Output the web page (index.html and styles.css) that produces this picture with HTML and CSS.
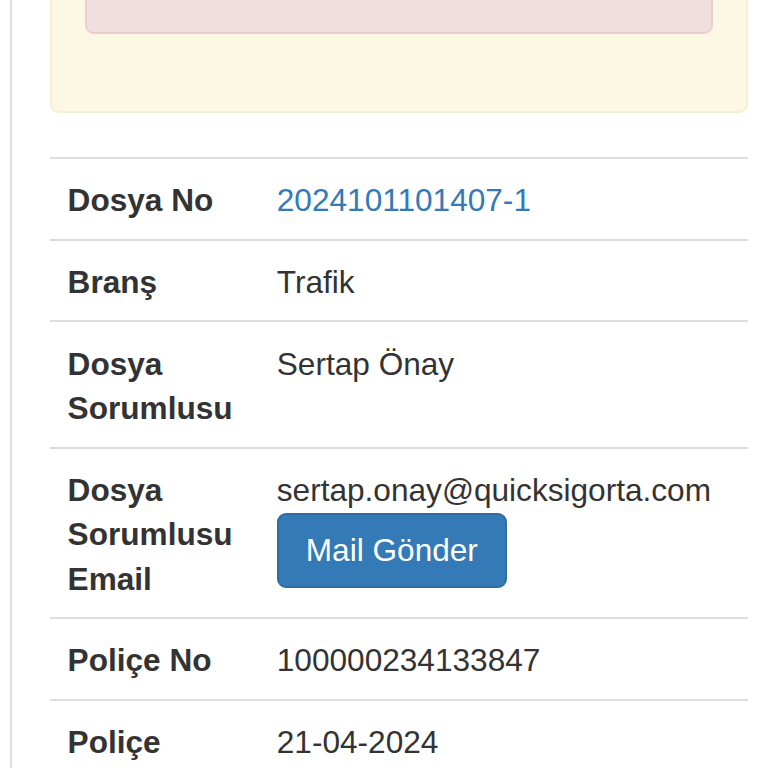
FILE: index.html
```html
<!DOCTYPE html>
<html lang="tr">
<head>
<meta charset="utf-8">
<title>Dosya Detay</title>
<link rel="stylesheet" href="styles.css">
</head>
<body>
<div class="page">
  <div class="alert alert-warning">
    <div class="alert alert-danger"></div>
  </div>
  <table class="table">
    <tbody>
      <tr>
        <th>Dosya No</th>
        <td><a href="#" class="link">2024101101407-1</a></td>
      </tr>
      <tr>
        <th>Branş</th>
        <td>Trafik</td>
      </tr>
      <tr>
        <th>Dosya Sorumlusu</th>
        <td>Sertap Önay</td>
      </tr>
      <tr>
        <th>Dosya Sorumlusu Email</th>
        <td>sertap.onay@quicksigorta.com<button class="btn btn-primary">Mail Gönder</button></td>
      </tr>
      <tr>
        <th>Poliçe No</th>
        <td>100000234133847</td>
      </tr>
      <tr>
        <th>Poliçe Başlangıç</th>
        <td>21-04-2024</td>
      </tr>
    </tbody>
  </table>
</div>
</body>
</html>
```

FILE: styles.css
```css
html, body {
  margin: 0;
  padding: 0;
  background: #fff;
  overflow: hidden;
}
body {
  font-family: "Liberation Sans", Arial, Helvetica, sans-serif;
  font-size: 31.6px;
  line-height: 44.5px;
  color: #333;
}
.page {
  margin-left: 10px;
  border-left: 2px solid #dedede;
  padding-left: 38px;
  padding-right: 20px;
  min-height: 1200px;
}
.alert {
  border-radius: 9px;
  border: 2px solid transparent;
  box-sizing: border-box;
}
.alert-warning {
  background: #fcf8e3;
  border-color: #f7efd4;
  margin-top: -97px;
  padding: 33px 33px;
  margin-bottom: 44px;
}
.alert-danger {
  background: #f2dede;
  border-color: #ebccd1;
  height: 96px;
  margin-bottom: 44px;
}
.table {
  width: 100%;
  border-collapse: collapse;
  border-spacing: 0;
}
.table th,
.table td {
  border-top: 2px solid #dddddd;
  padding: 19.2px 17.6px 16px;
  text-align: left;
  vertical-align: top;
}
.table th {
  font-weight: bold;
  width: 174px;
}
.link {
  color: #337ab7;
  text-decoration: none;
}
.btn {
  display: block;
  width: max-content;
  font-family: inherit;
  font-size: 31.6px;
  line-height: 44.5px;
  padding: 13px 27px;
  border-radius: 9px;
  border: 2px solid transparent;
  margin: 1px 0 0;
  cursor: pointer;
}
.btn-primary {
  background: #337ab7;
  border-color: #2e6da4;
  color: #fff;
}
```
